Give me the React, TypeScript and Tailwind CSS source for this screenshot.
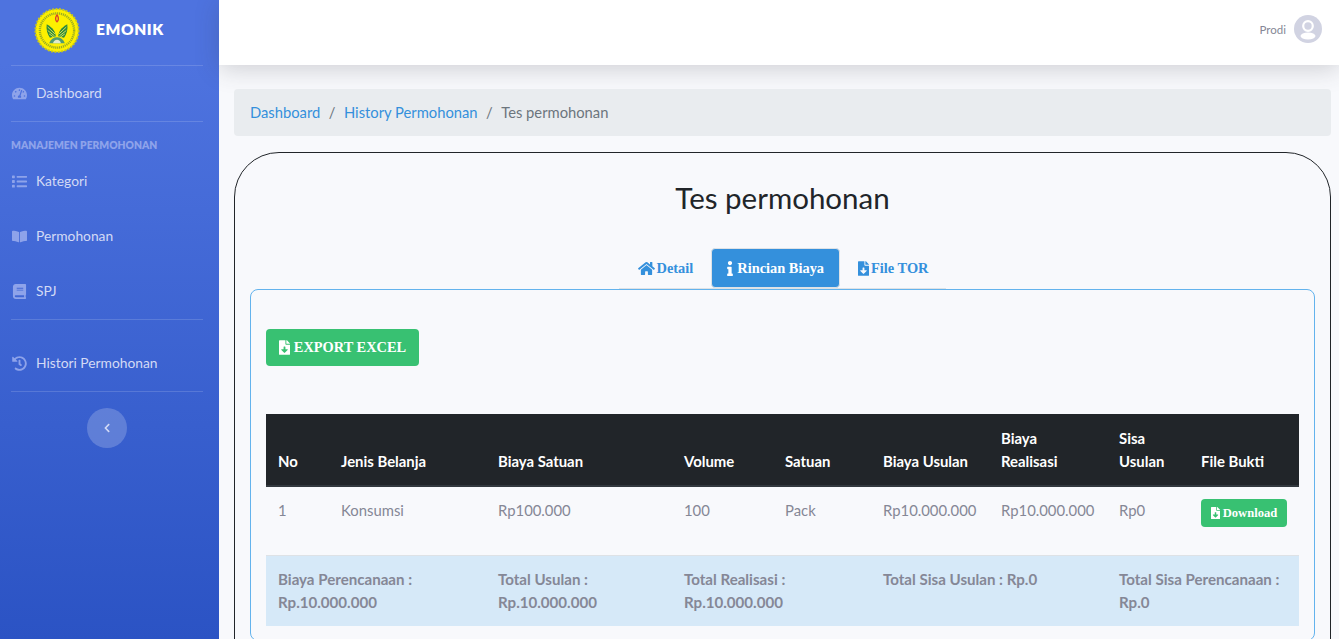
import { FaBook, FaBookOpen, FaChevronLeft, FaFileDownload, FaHistory, FaHome, FaInfo, FaList, FaTachometerAlt } from 'react-icons/fa'

const font = "font-['Lato','Noto_Sans',sans-serif]"
const serif = "font-['Liberation_Serif',serif] font-bold"

function Logo() {
  return (
    <svg viewBox="0 0 46 46" className="h-[45px] w-[46px]">
      <circle cx="23" cy="23" r="22" fill="#fdf000" stroke="#c9c81a" strokeWidth="2" strokeDasharray="2 1.500" />
      <circle cx="23" cy="23" r="20.500" fill="#fdf000" />
      {/* ring of small lettering, as it reads at this size */}
      <circle cx="23" cy="23" r="17.500" fill="none" stroke="#7f9a2c" strokeWidth="2.400" strokeDasharray="1.200 0.800" strokeOpacity="0.8" />
      <circle cx="23" cy="23" r="15.500" fill="#fdf000" />
      <path d="M23 6c2.200 3 2.600 5 1.600 7.300L23 15l-1.600-1.700C20.400 11 20.800 9 23 6z" fill="#d9402a" />
      <path d="M23 8.500c.8 1.500 1 2.700.4 3.900L23 13l-.4-.6c-.6-1.200-.4-2.400.4-3.900z" fill="#fdf000" />
      <path d="M21.800 29c-.5-5-3-9-9.300-12.500-.8 5 .5 10 3.300 14z" fill="#2f8a3c" />
      <path d="M24.200 29c.5-5 3-9 9.300-12.500.8 5-.5 10-3.300 14z" fill="#2f8a3c" />
      <path d="M13.500 19.500l7.500 7M13.500 23l7 5.500M15 26.500l4.500 3.200M32.500 19.500l-7.500 7M32.500 23l-7 5.500M31 26.500l-4.500 3.200" stroke="#e8ec60" strokeWidth="0.900" />
      <path d="M15 36c1.500-4 4.500-6 8-6s6.500 2 8 6z" fill="#4f9a72" />
      <path d="M19 36c.3-2.200 2-3.500 4-3.500s3.700 1.300 4 3.500z" fill="#dfe9c8" />
    </svg>
  )
}

function Avatar() {
  return (
    <svg viewBox="0 0 28 28" className="h-7 w-7">
      <circle cx="14" cy="14" r="14" fill="#d1d3e2" />
      <circle cx="14" cy="11" r="4.800" fill="none" stroke="#fff" strokeWidth="2.200" />
      <ellipse cx="14" cy="21" rx="7.500" ry="3.500" fill="#fff" />
    </svg>
  )
}

function NavItem({ icon: Icon, label, className }: { icon: typeof FaBook; label: string; className: string }) {
  return (
    <div className={`flex items-center px-[11px] text-[13.8px] text-[#d3daf5] ${className}`}>
      <span className="flex w-[25px] shrink-0 justify-start pl-[1px] text-[#8ea3ea]">
        <Icon size={15} />
      </span>
      {label}
    </div>
  )
}

const Divider = () => <div className="ml-[11px] mr-[16px] h-px bg-white/15" />

const headers = ['No', 'Jenis Belanja', 'Biaya Satuan', 'Volume', 'Satuan', 'Biaya Usulan', 'Biaya Realisasi', 'Sisa Usulan', 'File Bukti']
const widths = [63, 157, 186, 101, 98, 118, 118, 82, 110]
const row = ['1', 'Konsumsi', 'Rp100.000', '100', 'Pack', 'Rp10.000.000', 'Rp10.000.000', 'Rp0']
const totals: [string, number][] = [
  ['Biaya Perencanaan : Rp.10.000.000', 2],
  ['Total Usulan : Rp.10.000.000', 1],
  ['Total Realisasi : Rp.10.000.000', 2],
  ['Total Sisa Usulan : Rp.0', 2],
  ['Total Sisa Perencanaan : Rp.0', 2],
]

export default function App() {
  return (
    <div className={`flex h-screen overflow-hidden bg-[#f8f9fc] ${font} text-[#858796]`}>
      {/* Sidebar */}
      <aside className="flex w-[219px] shrink-0 flex-col bg-gradient-to-b from-[#4e73df] from-10% to-[#2b53c4]">
        <div className="flex h-[65px] items-center pb-[5px]">
          <div className="ml-[34px] flex"><Logo /></div>
          <span className="ml-[16px] text-[15.5px] font-extrabold tracking-[0.6px] text-white">EMONIK</span>
        </div>
        <Divider />
        <NavItem icon={FaTachometerAlt} label="Dashboard" className="h-[55px]" />
        <Divider />
        <div className="px-[11px] pb-[7px] pt-[17px] text-[10.3px] leading-[13px] font-extrabold text-[#8ea3ea]">MANAJEMEN PERMOHONAN</div>
        <NavItem icon={FaList} label="Kategori" className="h-[42px] pt-[2px]" />
        <NavItem icon={FaBookOpen} label="Permohonan" className="mt-[13px] h-[42px] pt-[2px]" />
        <NavItem icon={FaBook} label="SPJ" className="mt-[13px] h-[42px] pt-[2px]" />
        <div className="mt-[8px]"><Divider /></div>
        <NavItem icon={FaHistory} label="Histori Permohonan" className="mt-[21px] h-[42px] pt-[2px]" />
        <div className="mt-[8px]"><Divider /></div>
        <button className="ml-[87px] mt-[16px] flex h-10 w-10 items-center justify-center rounded-full bg-white/20 pr-[1px] text-[#d3daf5]">
          <FaChevronLeft size={10} />
        </button>
      </aside>

      {/* Main */}
      <main className="min-w-0 flex-1">
        <header className="flex h-[65px] items-center justify-end bg-white pb-[7px] pr-[17px] shadow-[0_4px_24px_rgba(58,59,69,0.22)]">
          <span className="mr-[8px] mt-[2px] text-[11.5px] text-[#858796]">Prodi</span>
          <Avatar />
        </header>

        <nav className="ml-[15px] mr-[8px] mt-[24px] flex h-[47px] items-center rounded-[4px] bg-[#e9ecef] px-4 text-[14.75px]">
          <span className="text-[#3490dc]">Dashboard</span>
          <span className="px-[8.500px] text-[#6c757d]">/</span>
          <span className="text-[#3490dc]">History Permohonan</span>
          <span className="px-[8.500px] text-[#6c757d]">/</span>
          <span className="text-[#6c757d]">Tes permohonan</span>
        </nav>

        <section className="ml-[15px] mr-[8px] mt-[16px] h-[600px] rounded-t-[45px] border border-[#212529] px-[15px]">
          <h1 className="pt-[27px] text-center text-[29.5px] leading-[36px] text-[#212529]">Tes permohonan</h1>

          {/* Tabs */}
          <div className="relative z-10 mt-[32px] flex justify-center">
            <div className={`flex h-[41px] border-b border-[#dee2e6] text-[14.4px] ${serif}`}>
              <div className="flex items-center gap-[2px] pl-[19px] pr-[18px] pt-[1px] text-[#3490dc]">
                <FaHome className="h-[15px] w-[17px]" /> Detail
              </div>
              <div className="flex items-center gap-[4px] rounded-[4px] border border-[#dee2e6] bg-[#3490dc] px-[15px] pt-[1px] text-white">
                <FaInfo className="h-[15px] w-[6px]" /> Rincian Biaya
              </div>
              <div className="flex items-center gap-[2px] pl-[18px] pr-[18px] pt-[1px] text-[#3490dc]">
                <FaFileDownload className="h-[15px] w-[11px]" /> File TOR
              </div>
            </div>
          </div>

          {/* Panel */}
          <div className="h-[352px] rounded-[8px] border border-[#63b3ed] px-[15px] pt-[39px]">
            <button className={`flex h-[37px] w-[153px] items-center justify-center gap-[4px] rounded-[4px] bg-[#38c172] text-[14.4px] text-white ${serif}`}>
              <FaFileDownload className="h-[15px] w-[11px]" /> EXPORT EXCEL
            </button>

            <table className="mt-[48px] w-[1033px] table-fixed border-collapse text-[14.85px] leading-[23px]">
              <colgroup>
                {widths.map((w, i) => <col key={i} span={1} width={w} />)}
              </colgroup>
              <thead>
                <tr className="border-b-2 border-[#32383e] bg-[#212529] text-[14.9px] text-white">
                  {headers.map(h => (
                    <th key={h} className="px-3 pb-[12px] pt-[13px] text-left align-bottom font-bold">{h}</th>
                  ))}
                </tr>
              </thead>
              <tbody>
                <tr className="h-[69px]">
                  {row.map((c, i) => (
                    <td key={i} className="px-3 pb-[20px] align-middle">{c}</td>
                  ))}
                  <td className="px-3 pb-[15px] align-middle">
                    <button className={`flex h-7 w-[86px] items-center justify-center gap-[3px] rounded-[4px] bg-[#38c172] text-[12.6px] text-white ${serif}`}>
                      <FaFileDownload className="h-[12px] w-[9px]" /> Download
                    </button>
                  </td>
                </tr>
              </tbody>
              <tfoot>
                <tr className="h-[71px] border-t border-[#dee2e6] bg-[#d6e9f8] text-[15.1px]">
                  {totals.map(([t, span]) => (
                    <td key={t} colSpan={span} className="px-3 py-[12px] align-top font-bold">{t}</td>
                  ))}
                </tr>
              </tfoot>
            </table>
          </div>
        </section>
      </main>
    </div>
  )
}
